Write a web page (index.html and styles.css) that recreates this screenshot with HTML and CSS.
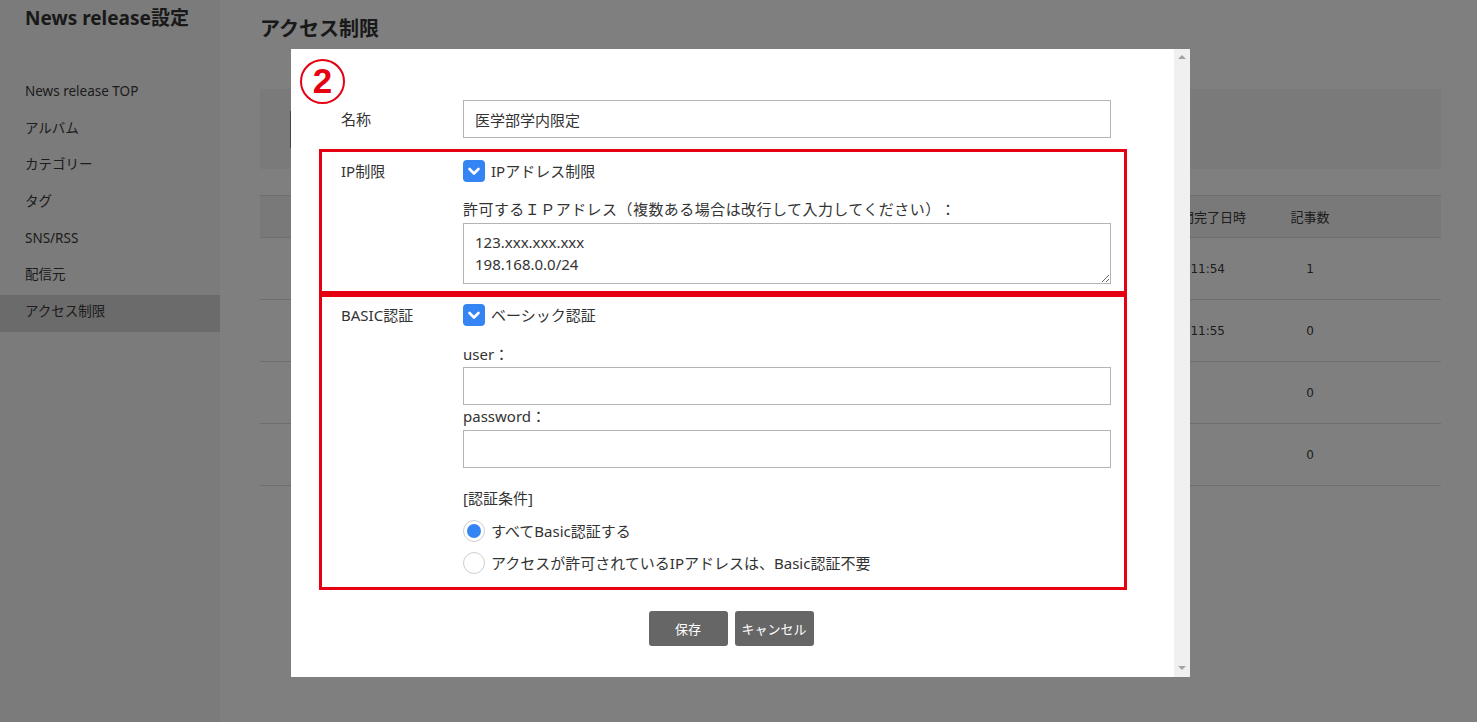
FILE: index.html
```html
<!DOCTYPE html>
<html lang="ja">
<head>
<meta charset="utf-8">
<title>アクセス制限</title>
<link rel="stylesheet" href="styles.css">
</head>
<body>
<div class="page">
  <aside class="sidebar">
    <h1 class="side-title">News release設定</h1>
    <nav class="side-nav">
      <a class="side-item">News release TOP</a>
      <a class="side-item">アルバム</a>
      <a class="side-item">カテゴリー</a>
      <a class="side-item">タグ</a>
      <a class="side-item">SNS/RSS</a>
      <a class="side-item">配信元</a>
      <a class="side-item active">アクセス制限</a>
    </nav>
  </aside>
  <main class="main">
    <h2 class="page-title">アクセス制限</h2>
    <div class="search-box"><div class="search-field"></div></div>
    <div class="table">
      <div class="tr th">
        <div class="td"></div>
        <div class="td date-h">公開期間完了日時</div>
        <div class="td num">記事数</div>
        <div class="td"></div>
      </div>
      <div class="tr">
        <div class="td"></div>
        <div class="td date mono">2021/03/31 11:54</div>
        <div class="td num mono">1</div>
        <div class="td"></div>
      </div>
      <div class="tr">
        <div class="td"></div>
        <div class="td date mono">2021/03/31 11:55</div>
        <div class="td num mono">0</div>
        <div class="td"></div>
      </div>
      <div class="tr">
        <div class="td"></div>
        <div class="td date mono"></div>
        <div class="td num mono">0</div>
        <div class="td"></div>
      </div>
      <div class="tr">
        <div class="td"></div>
        <div class="td date mono"></div>
        <div class="td num mono">0</div>
        <div class="td"></div>
      </div>
    </div>
  </main>
</div>

<div class="overlay"></div>

<div class="modal">
  <div class="modal-body">
    <div class="marker">2</div>

    <div class="row name-row">
      <div class="label">名称</div>
      <div class="field"><input class="text-input" type="text" value="医学部学内限定"></div>
    </div>

    <section class="box box-ip">
      <div class="row">
        <div class="label">IP制限</div>
        <div class="field">
          <label class="check">
            <span class="check-box"><svg viewBox="0 0 22 22" width="22" height="22"><polyline points="6.5,9 11,13.5 15.5,9" fill="none" stroke="#fff" stroke-width="2.6" stroke-linecap="round" stroke-linejoin="round"/></svg></span>
            <span>IPアドレス制限</span>
          </label>
          <div class="sub-label ip-label">許可するＩＰアドレス（複数ある場合は改行して入力してください）：</div>
          <textarea class="text-area">123.xxx.xxx.xxx
198.168.0.0/24</textarea>
        </div>
      </div>
    </section>

    <section class="box box-basic">
      <div class="row">
        <div class="label">BASIC認証</div>
        <div class="field">
          <label class="check">
            <span class="check-box"><svg viewBox="0 0 22 22" width="22" height="22"><polyline points="6.5,9 11,13.5 15.5,9" fill="none" stroke="#fff" stroke-width="2.6" stroke-linecap="round" stroke-linejoin="round"/></svg></span>
            <span>ベーシック認証</span>
          </label>
          <div class="sub-label user-label">user：</div>
          <input class="text-input" type="text" value="">
          <div class="sub-label pw-label">password：</div>
          <input class="text-input" type="text" value="">
          <div class="sub-label cond-label">[認証条件]</div>
          <div class="radio-row"><span class="radio on"></span><span>すべてBasic認証する</span></div>
          <div class="radio-row"><span class="radio"></span><span>アクセスが許可されているIPアドレスは、Basic認証不要</span></div>
        </div>
      </div>
    </section>

    <div class="buttons">
      <button class="btn">保存</button>
      <button class="btn">キャンセル</button>
    </div>
  </div>
  <div class="scrollbar">
    <span class="arrow up"></span>
    <span class="arrow down"></span>
  </div>
</div>
</body>
</html>
```

FILE: styles.css
```css
* { box-sizing: border-box; }

html, body {
  margin: 0;
  padding: 0;
  height: 100%;
}

body {
  font-family: "Noto Sans", "Noto Sans CJK JP", sans-serif;
  color: #333;
  background: #fff;
  overflow: hidden;
}

.page {
  display: flex;
  height: 722px;
}

/* sidebar */
.sidebar {
  width: 220px;
  flex: none;
  background: #f6f6f6;
}

.side-title {
  margin: 6px 0 0 25px;
  font-size: 19px;
  line-height: 24px;
  font-weight: bold;
  color: #333;
}

.side-nav {
  display: flex;
  flex-direction: column;
  margin-top: 45px;
}

.side-item {
  display: block;
  padding-left: 25px;
  height: 36.67px;
  line-height: 33px;
  font-size: 13.5px;
  color: #3a3a3a;
}

.side-item.active {
  background: #d6d6d6;
}

/* main */
.main {
  flex: 1;
  padding: 0 36px 0 40px;
}

.page-title {
  margin: 15px 0 0;
  font-size: 20px;
  line-height: 28px;
  font-weight: bold;
  color: #333;
}

.search-box {
  margin-top: 46px;
  height: 80px;
  background: #f4f4f4;
  padding: 22px 0 0 30px;
}

.search-field {
  width: 220px;
  height: 37px;
  border: 1px solid #999;
  border-left: 2px solid #888;
  background: #fff;
}

.table {
  margin-top: 26px;
}

.tr {
  display: grid;
  grid-template-columns: 830px 180px 80px 1fr;
  height: 62px;
  border-bottom: 1px solid #ddd;
  align-items: center;
  font-size: 13px;
  color: #3a3a3a;
}

.tr.th {
  height: 43px;
  background: #f2f2f2;
  border-top: 1px solid #ddd;
}

.td.date {
  text-align: right;
  padding-right: 45px;
}

.td.date-h {
  text-align: right;
  padding-right: 24px;
  white-space: nowrap;
}

.td.num {
  text-align: center;
}

.mono {
  font-family: "DejaVu Sans", sans-serif;
  font-size: 12px;
}

.th .td {
  font-family: "Noto Sans CJK JP", sans-serif;
  font-size: 13px;
}

/* overlay */
.overlay {
  position: fixed;
  inset: 0;
  background: rgba(0, 0, 0, 0.5);
}

/* modal */
.modal {
  position: fixed;
  left: 291px;
  top: 49px;
  width: 899px;
  height: 628px;
  background: #fff;
  display: flex;
}

.modal-body {
  position: relative;
  flex: 1;
  padding: 51px 47px 0 28px;
  font-size: 15px;
  color: #333;
  text-spacing-trim: space-all;
}

.marker {
  position: absolute;
  left: 9px;
  top: 10px;
  width: 45px;
  height: 45px;
  border: 2.5px solid #e50012;
  border-radius: 50%;
  color: #e50012;
  font-family: "Liberation Sans", "Noto Sans", sans-serif;
  font-weight: bold;
  font-size: 35px;
  line-height: 40px;
  text-align: center;
}

.row {
  display: grid;
  grid-template-columns: 122px 648px;
  align-items: start;
}

.name-row {
  align-items: center;
  padding-left: 22px;
  margin-bottom: 11px;
}

.label {
  line-height: 22px;
}

.field {
  display: flex;
  flex-direction: column;
}

.text-input {
  display: block;
  width: 648px;
  height: 38px;
  border: 1px solid #b3b3b3;
  border-radius: 0;
  padding: 0 11px;
  font: inherit;
  font-size: 15px;
  color: #333;
  background: #fff;
  outline: none;
}

.box {
  border: 3px solid #e50012;
  padding-left: 19px;
}

.box-ip {
  padding-top: 8px;
  padding-bottom: 7px;
}

.box-basic {
  padding-top: 7px;
  padding-bottom: 13px;
}

.check {
  display: flex;
  align-items: center;
  gap: 6px;
  height: 22px;
  line-height: 22px;
}

.check-box {
  width: 22px;
  height: 22px;
  border-radius: 4px;
  background: #3584f4;
  display: flex;
}

.sub-label {
  line-height: 20px;
}

.ip-label {
  margin-top: 17px;
  margin-bottom: 4px;
  letter-spacing: 0.45px;
  white-space: nowrap;
}

.text-area {
  display: block;
  width: 648px;
  height: 61px;
  border: 1px solid #b3b3b3;
  border-radius: 0;
  padding: 7px 11px;
  font: inherit;
  font-size: 15px;
  line-height: 22px;
  color: #333;
  resize: both;
  outline: none;
}

.user-label { margin-top: 18px; margin-bottom: 3px; }
.pw-label { margin-top: 1px; margin-bottom: 4px; }
.cond-label { margin-top: 20px; margin-bottom: 12px; }

.radio-row {
  display: flex;
  align-items: center;
  gap: 6px;
  height: 22px;
  line-height: 22px;
}

.radio-row + .radio-row {
  margin-top: 10px;
}

.radio {
  width: 22px;
  height: 22px;
  border-radius: 50%;
  border: 1px solid #cfcfcf;
  background: #fff;
  flex: none;
  position: relative;
}

.radio.on::after {
  content: "";
  position: absolute;
  left: 3px;
  top: 3px;
  width: 14px;
  height: 14px;
  border-radius: 50%;
  background: #3584f4;
}

.buttons {
  display: flex;
  justify-content: center;
  gap: 7px;
  margin-top: 21px;
  padding-left: 16px;
}

.btn {
  width: 79px;
  height: 35px;
  border: none;
  border-radius: 3px;
  background: #666;
  color: #fff;
  font-family: "Noto Sans CJK JP", sans-serif;
  font-size: 13px;
  padding: 0;
}

.scrollbar {
  width: 16px;
  flex: none;
  background: #f0f0f0;
  display: flex;
  flex-direction: column;
  justify-content: space-between;
  align-items: center;
  padding: 6px 0 7px;
}

.arrow {
  width: 0;
  height: 0;
  border-left: 4px solid transparent;
  border-right: 4px solid transparent;
}

.arrow.up { border-bottom: 4px solid #a3a3a3; }
.arrow.down { border-top: 4px solid #a3a3a3; }
```
